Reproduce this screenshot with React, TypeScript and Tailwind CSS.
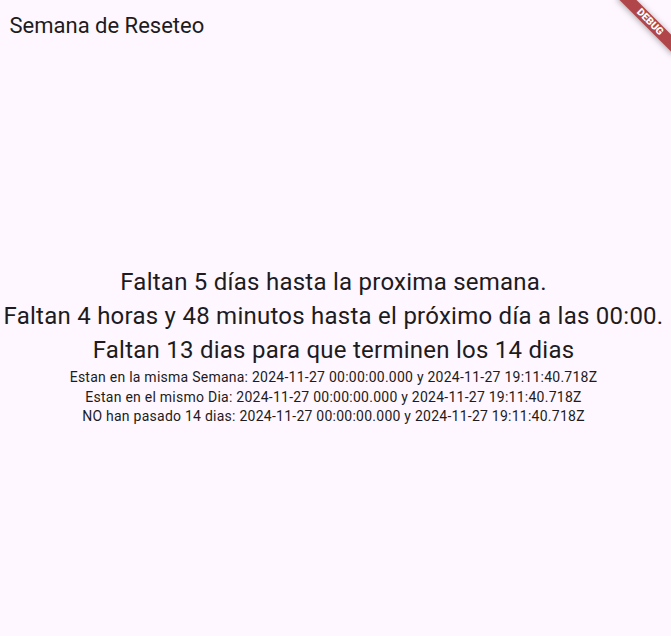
import React from "react";

export default function App() {
  return (
    <div
      className="relative flex h-[636px] w-full flex-col overflow-hidden bg-[#fef7ff] text-[#1d1b20]"
      style={{ fontFamily: "Roboto, 'Noto Sans', sans-serif" }}
    >
      <header className="flex h-14 shrink-0 items-center pb-[5px] pl-[9.5px]">
        <h1 className="text-[22px] font-normal leading-[28px]">Semana de Reseteo</h1>
      </header>
      <main className="flex flex-1 flex-col items-center justify-center pr-[4px] text-center">
        <div className="text-[24px] leading-[34px] tracking-[0.25px]">
          <p>Faltan 5 días hasta la proxima semana.</p>
          <p>Faltan 4 horas y 48 minutos hasta el próximo día a las 00:00.</p>
          <p>Faltan 13 dias para que terminen los 14 dias</p>
        </div>
        <div className="mt-px text-[14px] leading-[19.5px] tracking-[0.25px]">
          <p>Estan en la misma Semana: 2024-11-27 00:00:00.000 y 2024-11-27 19:11:40.718Z</p>
          <p>Estan en el mismo Dia: 2024-11-27 00:00:00.000 y 2024-11-27 19:11:40.718Z</p>
          <p>NO han pasado 14 dias: 2024-11-27 00:00:00.000 y 2024-11-27 19:11:40.718Z</p>
        </div>
      </main>
      <div className="pointer-events-none absolute right-[-18.5px] top-[15.5px] flex h-[12px] w-[80px] rotate-45 items-center justify-center bg-[#b0464a] shadow-[0_1px_6px_rgba(0,0,0,0.35)]">
        <span className="text-[10.2px] font-black leading-none tracking-normal text-white">DEBUG</span>
      </div>
    </div>
  );
}
